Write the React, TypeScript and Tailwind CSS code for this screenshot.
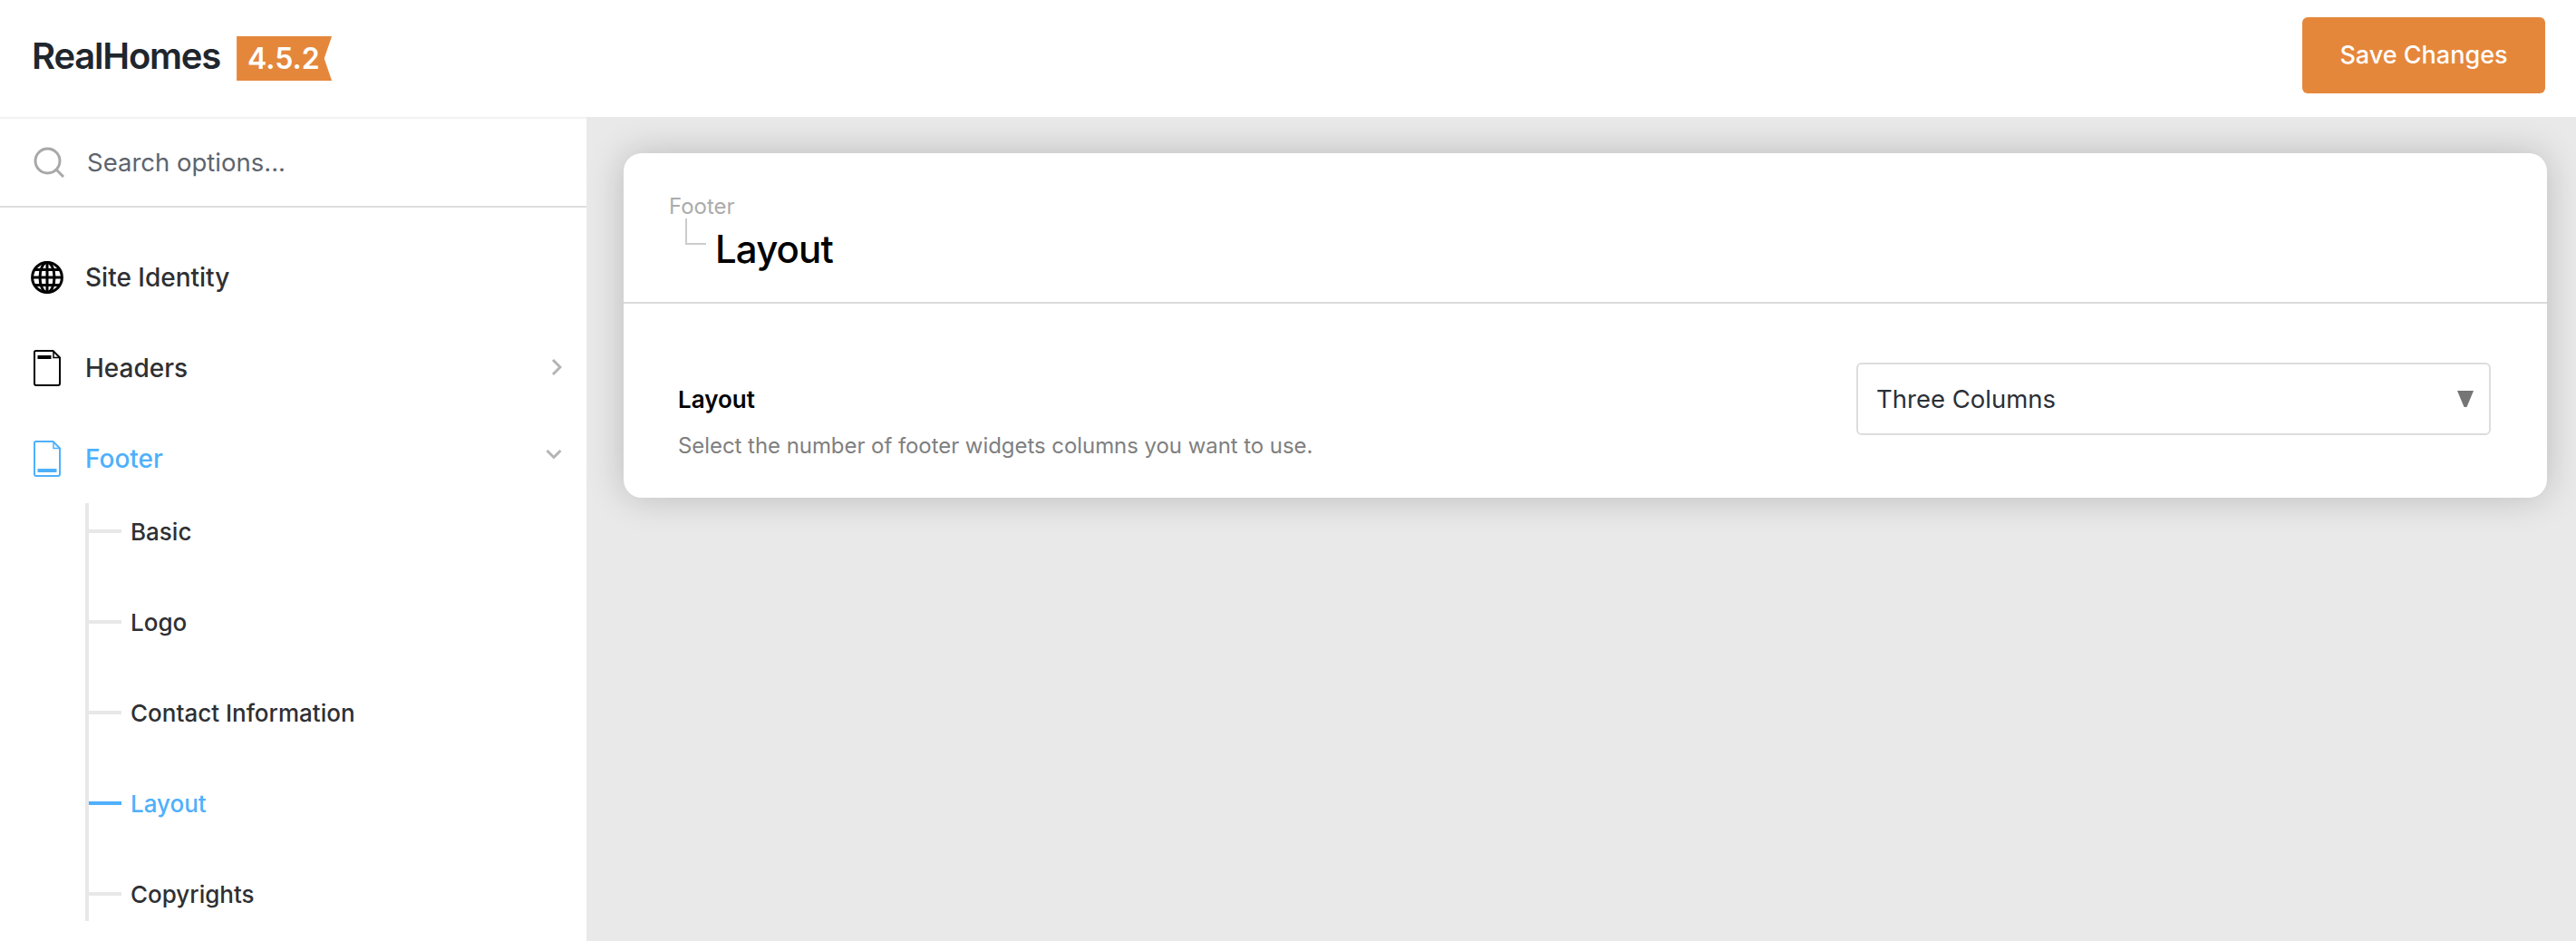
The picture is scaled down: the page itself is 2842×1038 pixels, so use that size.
import { ReactNode } from "react";

const SUB_ITEMS = ["Basic", "Logo", "Contact Information", "Layout", "Copyrights"];

function GlobeIcon() {
  return (
    <svg width="36" height="36" viewBox="0 0 36 36" fill="none" stroke="#000" strokeWidth="3">
      <circle cx="18" cy="18" r="16.4" />
      <ellipse cx="18" cy="18" rx="8" ry="16.4" />
      <path d="M18 1.6v32.8M1.6 18h32.8M4 9.5h28M4 26.5h28" />
    </svg>
  );
}

function PageIcon({ color, bar }: { color: string; bar: "top" | "bottom" }) {
  return (
    <svg width="30" height="40" viewBox="0 0 30 40" fill="none">
      <path
        d="M2.5 1h19L29 8.500V37a2 2 0 0 1-2 2H3a2 2 0 0 1-2-2V2.500A1.500 1.500 0 0 1 2.500 1Z"
        stroke={color}
        strokeWidth="2"
      />
      <path d="M22 1.500V8.500H28.500" stroke={color} strokeWidth="1.500" />
      {bar === "top" ? (
        <rect x="4.500" y="6" width="15" height="4" fill={color} />
      ) : (
        <rect x="4.500" y="31" width="21" height="4" fill={color} />
      )}
    </svg>
  );
}

function NavRow({
  icon,
  label,
  active,
  chevron,
}: {
  icon: ReactNode;
  label: string;
  active?: boolean;
  chevron?: "right" | "down";
}) {
  return (
    <div className="flex h-[100px] items-center pl-[34px] pr-[27px]">
      <div className="flex w-[36px] justify-center">{icon}</div>
      <span
        className={`ml-[24px] text-[28px] font-medium ${active ? "text-[#4fb0fb]" : "text-[#2f3033]"}`}
      >
        {label}
      </span>
      {chevron === "right" && (
        <svg className="mb-[2px] ml-auto" width="12" height="20" viewBox="0 0 12 20" fill="none" stroke="#b4b4b4" strokeWidth="3">
          <path d="M2 2l8 8-8 8" />
        </svg>
      )}
      {chevron === "down" && (
        <svg className="mb-[10px] ml-auto" width="18" height="12" viewBox="0 0 18 12" fill="none" stroke="#b4b4b4" strokeWidth="3">
          <path d="M1.500 2L9 9.500 16.500 2" />
        </svg>
      )}
    </div>
  );
}

export default function App() {
  return (
    <div
      className="flex h-[1038px] w-full flex-col overflow-hidden bg-[#e9e9e9]"
      style={{ fontFamily: "Inter, 'Noto Sans', sans-serif" }}
    >
      <header className="flex h-[129px] shrink-0 items-center justify-between bg-white pl-[35px] pr-[34px]">
        <div className="flex items-center">
          <span className="mb-[6px] text-[40px] font-semibold tracking-[-1.2px] text-[#1f262d]">RealHomes</span>
          <span className="ml-[18px] flex h-[49px] w-[105px] items-center bg-[#e5873b] pl-[12px] text-[32px] font-semibold text-white [clip-path:polygon(0_0,100%_0,92%_50%,100%_100%,0_100%)]">
            4.5.2
          </span>
        </div>
        <button className="mb-[7px] h-[84px] w-[268px] rounded-[6px] bg-[#e5873b] text-[27px] font-medium text-white">
          Save Changes
        </button>
      </header>

      <div className="flex min-h-0 flex-1">
        <aside className="w-[647px] shrink-0 border-t-[2px] border-[#f2f2f2] bg-white">
          <div className="flex h-[98px] items-center border-b-[2px] border-[#dddddd] pl-[37px]">
            <svg width="34" height="34" viewBox="0 0 34 34" fill="none" stroke="#a8a8a8" strokeWidth="3">
              <circle cx="15.500" cy="15.500" r="13.500" />
              <path d="M25 25l8 8" />
            </svg>
            <span className="ml-[25px] mt-[1px] text-[27.5px] text-[#5e646d]">Search options...</span>
          </div>

          <nav className="pt-[27px]">
            <NavRow icon={<GlobeIcon />} label="Site Identity" />
            <NavRow icon={<PageIcon color="#000000" bar="top" />} label="Headers" chevron="right" />
            <NavRow icon={<PageIcon color="#4fb0fb" bar="bottom" />} label="Footer" active chevron="down" />
            <ul className="ml-[94px] -mt-[1px] flex flex-col gap-[40px] border-l-[4px] border-[#e8e8e8] pt-[1px]">
              {SUB_ITEMS.map((item) => (
                <li key={item} className="flex h-[60px] items-center">
                  <span className={`h-[4px] w-[36px] ${item === "Layout" ? "bg-[#4fb0fb]" : "bg-[#e8e8e8]"}`} />
                  <span
                    className={`ml-[10px] text-[26px] font-medium ${item === "Layout" ? "text-[#4fb0fb]" : "text-[#2f3033]"}`}
                  >
                    {item}
                  </span>
                </li>
              ))}
            </ul>
          </nav>
        </aside>

        <main className="min-w-0 flex-1 pb-[40px] pl-[41px] pr-[32px] pt-[40px]">
          <section className="rounded-[20px] bg-white shadow-[0_0_40px_rgba(0,0,0,0.2)]">
            <div className="h-[166px] border-b-[2px] border-[#dbdbdb] pl-[50px] pt-[46px]">
              <div className="text-[24px] leading-[26px] text-[#ababab]">Footer</div>
              <div className="flex">
                <span className="ml-[18px] h-[29px] w-[23px] border-b-[2px] border-l-[2px] border-[#cccccc]" />
                <h1 className="ml-[10px] mt-[9px] text-[42px] leading-[50px] font-medium tracking-[-0.9px] text-black">
                  Layout
                </h1>
              </div>
            </div>
            <div className="flex h-[214px] justify-between pl-[60px] pr-[62px] pt-[65px]">
              <div className="pt-[26px]">
                <div className="text-[26px] leading-[30px] font-semibold text-black">Layout</div>
                <p className="mt-[21px] text-[24px] leading-[30px] tracking-[-0.06px] text-[#808080]">
                  Select the number of footer widgets columns you want to use.
                </p>
              </div>
              <div className="flex h-[80px] w-[700px] items-center justify-between rounded-[6px] border-[2px] border-[#dddddd] pl-[20px] pr-[17px]">
                <span className="mt-[1px] text-[27.5px] text-[#2b3038]">Three Columns</span>
                <svg width="18" height="18" viewBox="0 0 18 18">
                  <path d="M0 0h18L10.500 18h-3Z" fill="#757575" />
                </svg>
              </div>
            </div>
          </section>
        </main>
      </div>
    </div>
  );
}
